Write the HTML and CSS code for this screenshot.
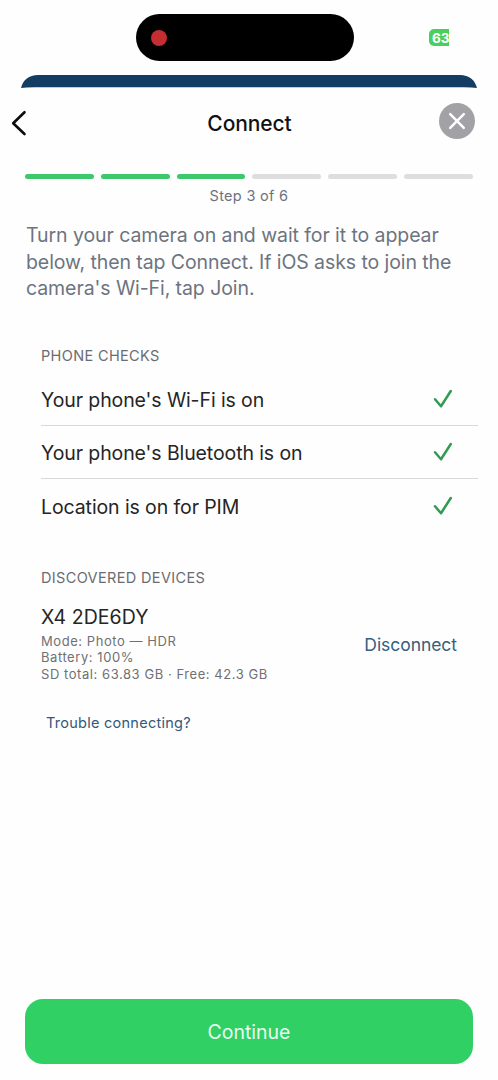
FILE: index.html
```html
<!DOCTYPE html>
<html lang="en">
<head>
<meta charset="utf-8">
<title>Connect</title>
<link rel="stylesheet" href="styles.css">
</head>
<body>
<div class="screen">
  <div class="status">
    <div class="island"><span class="rec"></span></div>
    <div class="battery"><span>63</span></div>
  </div>
  <svg class="back-sheet" width="456" height="13" viewBox="0 0 456 13"><path d="M0 13C2 5 8 0 17 0H439C448 0 454 5 456 13Q451 12.2 443 12.2H13Q5 12.2 0 13Z" fill="#133d63"/></svg>
  <header class="header">
    <svg class="back" width="16" height="26" viewBox="0 0 16 26"><path d="M13.5 2.2 2.2 13.3 13.5 24" fill="none" stroke="#0c0c0c" stroke-width="2.6" stroke-linecap="round" stroke-linejoin="round"/></svg>
    <h1 class="title">Connect</h1>
    <svg class="close" width="36" height="36" viewBox="0 0 36 36"><circle cx="18" cy="18" r="18" fill="#a2a2a6"/><path d="M11.2 11.2 24.8 24.8M24.8 11.2 11.2 24.8" stroke="#fff" stroke-width="2.5" stroke-linecap="round"/></svg>
  </header>
  <div class="steps"><i class="step done"></i><i class="step done"></i><i class="step done"></i><i class="step"></i><i class="step"></i><i class="step"></i></div>
  <p class="step-label">Step 3 of 6</p>
  <p class="intro">Turn your camera on and wait for it to appear<br>below, then tap Connect. If iOS asks to join the<br>camera's Wi-Fi, tap Join.</p>
  <section class="checks">
    <h2 class="section-title">PHONE CHECKS</h2>
    <div class="row"><span class="label">Your phone's Wi-Fi is on</span><svg class="tick" width="20" height="20" viewBox="0 0 20 20"><path d="M2 10.3 8 17.2 17.8 2" /></svg></div>
    <div class="row"><span class="label">Your phone's Bluetooth is on</span><svg class="tick" width="20" height="20" viewBox="0 0 20 20"><path d="M2 10.3 8 17.2 17.8 2" /></svg></div>
    <div class="row"><span class="label">Location is on for PIM</span><svg class="tick" width="20" height="20" viewBox="0 0 20 20"><path d="M2 10.3 8 17.2 17.8 2" /></svg></div>
  </section>
  <section class="devices">
    <h2 class="section-title">DISCOVERED DEVICES</h2>
    <div class="device">
      <div class="device-info">
        <div class="name">X4 2DE6DY</div>
        <div class="meta">Mode: Photo — HDR</div>
        <div class="meta">Battery: 100%</div>
        <div class="meta">SD total: 63.83 GB · Free: 42.3 GB</div>
      </div>
      <a class="disconnect">Disconnect</a>
    </div>
    <a class="trouble">Trouble connecting?</a>
  </section>
  <button class="continue">Continue</button>
</div>
</body>
</html>
```
FILE: styles.css
```css
* { box-sizing: border-box; }
body { margin: 0; background: #fefefe; font-family: Inter, "Liberation Sans", sans-serif; }
h1, h2, p { margin: 0; font-weight: 400; }
.screen { width: 498px; height: 1080px; display: flex; flex-direction: column; overflow: hidden; }
.status { height: 75px; flex: none; padding: 14px 49px 0 136px; display: flex; justify-content: space-between; align-items: flex-start; }
.island { width: 218px; height: 47px; border-radius: 24px; background: #000; display: flex; align-items: center; padding-left: 15px; }
.rec { width: 16px; height: 16px; border-radius: 50%; background: #c42d32; }
.battery { width: 20px; height: 17px; margin-top: 14.5px; border-radius: 5px 0 0 5px; background: #48cf5d; color: #fff; font-size: 13.5px; line-height: 18px; font-weight: 700; overflow: hidden; padding-left: 3px; white-space: nowrap; }
.back-sheet { display: block; flex: none; margin-left: 21px; }
.header { height: 70px; flex: none; display: flex; justify-content: space-between; align-items: center; padding: 0 23px 0 11px; }
.back { margin-right: 33px; }
.title { font-size: 21px; line-height: 26px; font-weight: 500; color: #111; letter-spacing: -0.1px; margin-top: 1px; }
.close { margin-top: -4px; }
.steps { display: flex; gap: 7px; height: 5px; margin: 15.6px 25px 0; flex: none; }
.step { flex: 1; border-radius: 3px; background: #dededf; }
.step.done { background: #3dc86b; }
.step-label { margin-top: 7.4px; line-height: 20px; font-size: 14.5px; letter-spacing: 0.3px; color: #6c7280; text-align: center; }
.intro { margin: 16px 0 0 26px; font-size: 19.5px; line-height: 26.6px; letter-spacing: -0.08px; color: #6c7480; white-space: nowrap; }
.section-title { padding-left: 41px; font-size: 14.5px; line-height: 20px; letter-spacing: 0.35px; color: #6b6c70; }
.checks { margin-top: 44px; }
.row { height: 53.2px; margin: 0 20px 0 41px; padding-right: 25px; border-bottom: 1px solid #d9d9db; display: flex; align-items: center; justify-content: space-between; font-size: 19.5px; letter-spacing: -0.1px; color: #252525; }
.label { padding-top: 2px; }
.section-title + .row { margin-top: 7px; }
.row:last-child { border: 0; }
.tick path { fill: none; stroke: #329b52; stroke-width: 2.5; stroke-linecap: round; stroke-linejoin: round; }
.devices { margin-top: 36px; display: flex; flex-direction: column; align-items: flex-start; }
.device { align-self: stretch; margin-top: 16px; padding: 0 41px; display: flex; justify-content: space-between; align-items: center; }
.name { font-size: 19.5px; line-height: 26px; margin-bottom: 2.6px; letter-spacing: 0.05px; color: #252525; }
.meta { font-size: 13px; line-height: 16.4px; letter-spacing: 0.56px; color: #6f7074; }
.disconnect { font-size: 17.5px; letter-spacing: -0.05px; color: #365f80; line-height: 22px; margin-top: 4px; }
.trouble { margin: 30.4px 0 0 46px; font-size: 14.5px; line-height: 20px; letter-spacing: 0.26px; color: #33597a; }
.continue { margin: auto 25px 16px; height: 65px; flex: none; border: 0; border-radius: 18px; background: #30d065; color: #e9fbef; font: 400 19.5px/26px Inter, sans-serif; }
```
